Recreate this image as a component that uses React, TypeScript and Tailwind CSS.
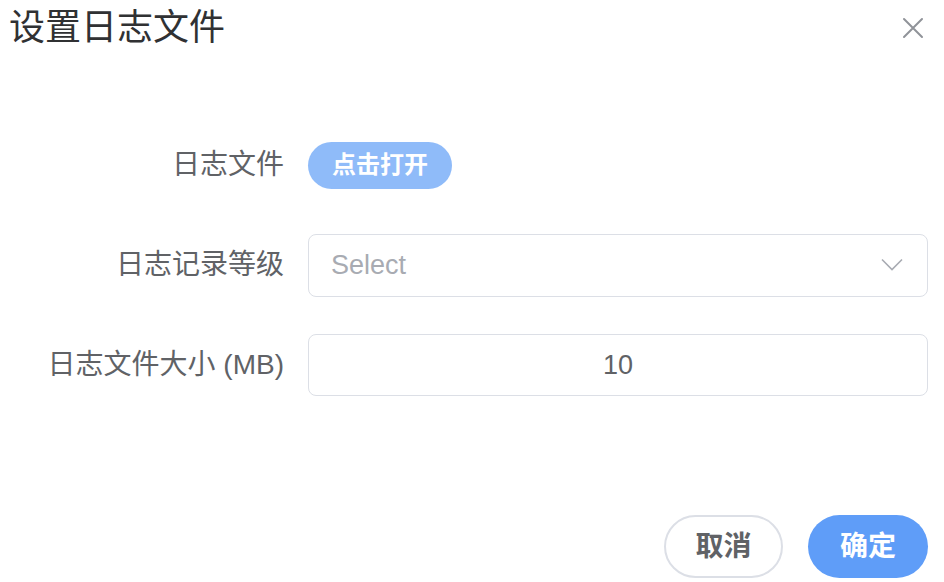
import React from "react";

const font = { fontFamily: '"Liberation Sans", "Noto Sans CJK SC", sans-serif' };

function Row({ label, children }: { label: string; children: React.ReactNode }) {
  return (
    <div className="flex h-16 items-center">
      <div className="w-[308px] shrink-0 pr-[24px] text-right text-[28px] leading-none text-[#606266]">{label}</div>
      <div className="flex flex-1 items-center">{children}</div>
    </div>
  );
}

export default function App() {
  return (
    <div className="relative h-[582px] w-[944px] overflow-hidden bg-white" style={font}>
      <div className="flex h-[56px] items-center justify-between pl-[9px] pr-[20px]">
        <div className="text-[36px] leading-none text-[#303133]">设置日志文件</div>
        <svg width="22" height="22" viewBox="0 0 22 22" className="mt-[-1px]">
          <path d="M2 2 L20 20 M20 2 L2 20" stroke="#909399" strokeWidth="2" strokeLinecap="round" />
        </svg>
      </div>
      <div className="mt-[77px] flex flex-col gap-[36px] pr-[16px]">
        <Row label="日志文件">
          <button className="flex h-[47px] w-[144px] items-center justify-center rounded-full bg-[#8fbbf9] text-[24px] font-bold text-white">
            点击打开
          </button>
        </Row>
        <Row label="日志记录等级">
          <div className="flex h-[63px] w-full items-center justify-between rounded-[8px] border border-[#dcdfe6] pl-[22px] pr-[24px]">
            <span className="text-[27px] text-[#a8abb2]">Select</span>
            <svg width="22" height="14" viewBox="0 0 22 14">
              <path d="M1 1.5 L11 11.5 L21 1.5" fill="none" stroke="#a8abb2" strokeWidth="1.6" />
            </svg>
          </div>
        </Row>
        <Row label="日志文件大小 (MB)">
          <div className="flex h-[62px] w-full items-center justify-center rounded-[8px] border border-[#dcdfe6]">
            <span className="text-[27px] text-[#606266]">10</span>
          </div>
        </Row>
      </div>
      <div className="absolute bottom-[4px] right-[16px] flex gap-[25px]">
        <button className="flex h-[63px] w-[119px] items-center justify-center rounded-full border-2 border-[#dcdfe6] bg-white text-[28px] font-bold text-[#606266]">
          取消
        </button>
        <button className="flex h-[63px] w-[120px] items-center justify-center rounded-full bg-[#5f9df8] text-[28px] font-bold text-white">
          确定
        </button>
      </div>
    </div>
  );
}
